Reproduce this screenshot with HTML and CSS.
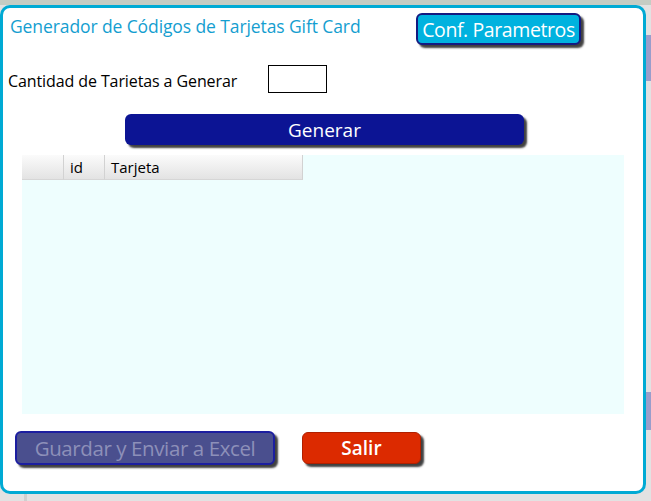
FILE: index.html
```html
<!DOCTYPE html>
<html>
<head>
    <meta charset="utf-8">
    <title>Generador de Códigos de Tarjetas Gift Card</title>
    <link rel="stylesheet" href="styles.css">
</head>
<body>
    <div class="topbar"></div>
    <div class="page">
        <div class="dialog">
            <div class="header">
                <div class="title">Generador de Códigos de Tarjetas Gift Card</div>
                <button class="btn btn-conf">Conf. Parametros</button>
            </div>

            <div class="qty-row">
                <label class="qty-label" for="qty">Cantidad de Tarietas a Generar</label>
                <input class="qty-input" id="qty" type="text">
            </div>

            <div class="generate-row">
                <button class="btn btn-generate">Generar</button>
            </div>

            <div class="grid">
                <div class="grid-head">
                    <div class="cell cell-row"></div>
                    <div class="cell cell-id">id</div>
                    <div class="cell cell-card">Tarjeta</div>
                </div>
            </div>

            <div class="footer">
                <button class="btn btn-excel" disabled>Guardar y Enviar a Excel</button>
                <button class="btn btn-exit">Salir</button>
            </div>
        </div>
        <div class="side">
            <div class="side-block top"></div>
            <div class="side-block bottom"></div>
        </div>
    </div>
    <div class="bottombar">
        <div class="bottom-line"></div>
    </div>
</body>
</html>
```

FILE: styles.css
```css
:root {
    --cyan: #00aad4;
    --navy: #0c1494;
    --grid-bg: #eefefe;
    --page-bg: #e2e2e2;
}

body {
    margin: 0;
    background: var(--page-bg);
    font-family: "Open Sans", "Noto Sans", sans-serif;
    width: 651px;
    height: 501px;
    overflow: hidden;
}

.topbar {
    height: 5px;
    background: #c5ccc3;
}

.page {
    display: flex;
}

.dialog {
    width: 646px;
    height: 489px;
    box-sizing: border-box;
    border: 3px solid var(--cyan);
    border-radius: 10px;
    background: #fff;
    display: flex;
    flex-direction: column;
}

.side {
    flex: 1;
    display: flex;
    flex-direction: column;
    padding-top: 30px;
}

.side-block {
    width: 5px;
    background: #9a9dcb;
}

.side-block.top {
    height: 46px;
}

.side-block.bottom {
    height: 38px;
    margin-top: 311px;
}

.bottombar {
    height: 7px;
    padding-left: 24px;
}

.bottom-line {
    width: 3px;
    height: 7px;
    background: #cfcfcf;
}

.header {
    display: flex;
    align-items: flex-start;
    padding: 5px 0 0 7px;
    height: 32px;
}

.title {
    color: #149ed0;
    font-size: 17.5px;
    line-height: 27px;
    width: 406px;
    letter-spacing: -0.1px;
}

.btn {
    font-family: "Open Sans", "Noto Sans", sans-serif;
    border-radius: 6px;
    box-shadow: 3px 3px 2px rgba(0, 0, 0, 0.75);
    cursor: pointer;
    padding: 0;
    white-space: nowrap;
}

.btn-conf {
    width: 165px;
    height: 32px;
    background: #00b2df;
    border: 2px solid #151a80;
    color: #fff;
    font-size: 19.5px;
    letter-spacing: -0.4px;
}

.qty-row {
    display: flex;
    align-items: center;
    margin-top: 20px;
    padding-left: 5px;
    height: 28px;
}

.qty-label {
    font-size: 16px;
    color: #000;
    width: 260px;
    letter-spacing: -0.1px;
    padding-top: 3px;
}

.qty-input {
    width: 59px;
    height: 28px;
    box-sizing: border-box;
    border: 1px solid #000;
    margin: 0;
    padding: 0;
}

.generate-row {
    margin-top: 21px;
    padding-left: 122px;
}

.btn-generate {
    width: 399px;
    height: 31px;
    background: var(--navy);
    border: none;
    color: #fff;
    font-size: 19px;
}

.grid {
    margin: 10px 0 0 19px;
    width: 602px;
    height: 259px;
    background: var(--grid-bg);
}

.grid-head {
    display: flex;
    height: 25px;
}

.cell {
    box-sizing: border-box;
    height: 25px;
    line-height: 25px;
    font-size: 15px;
    color: #000;
    padding-left: 6px;
    background: linear-gradient(#fbfbfb, #e3e3e3);
    border-right: 1px solid #d2d2d2;
    border-bottom: 1px solid #d6d6d6;
}

.cell-row {
    width: 42px;
}

.cell-id {
    width: 41px;
}

.cell-card {
    width: 198px;
}

.footer {
    display: flex;
    align-items: center;
    margin-top: 17px;
    padding-left: 12px;
}

.btn-excel {
    width: 260px;
    height: 34px;
    background: #4a4f8e;
    border: 2px solid #1c1ea0;
    color: #8d90b9;
    font-size: 20.5px;
    letter-spacing: -0.4px;
}

.btn-exit {
    width: 119px;
    height: 32px;
    margin-left: 27px;
    background: #dc2a00;
    border: 1px solid #b02000;
    color: #fff;
    font-size: 19px;
    font-weight: 600;
}
```
